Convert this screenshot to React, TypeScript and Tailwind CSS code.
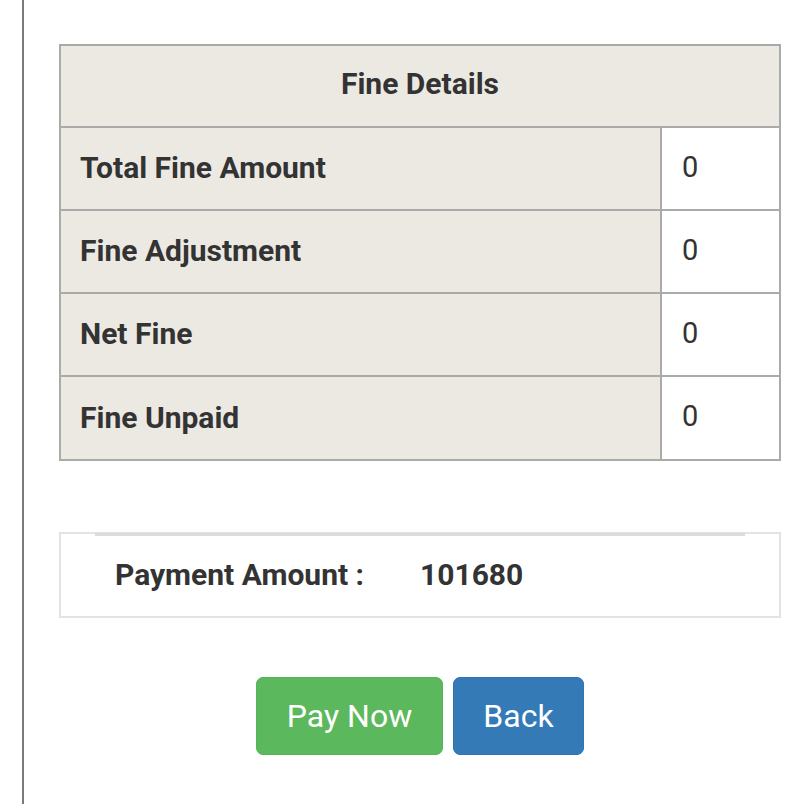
export default function App() {
  const rows = [
    ["Total Fine Amount", "0"],
    ["Fine Adjustment", "0"],
    ["Net Fine", "0"],
    ["Fine Unpaid", "0"],
  ];
  return (
    <div className="w-[800px] h-[804px] bg-white overflow-hidden flex font-['Roboto',sans-serif] text-[#333]">
      <div className="ml-[22px] h-full border-l-2 border-[#7a7a7a] pl-[35px] pt-[44px]">
        <div className="w-[722px] border-2 border-[#aaa] bg-[#ece9e3]">
          <div className="h-[82px] flex items-center justify-center border-b-2 border-[#aaa] text-[30px] font-bold pb-[5px]">
            Fine Details
          </div>
          {rows.map(([label, value], i) => (
            <div
              key={label}
              className={`flex ${i < rows.length - 1 ? "h-[83px] border-b-2 border-[#aaa]" : "h-[82px]"}`}
            >
              <div className="flex-1 flex items-center pl-[19px] text-[30px] font-bold pb-[2px]">{label}</div>
              <div className="w-[119px] border-l-2 border-[#aaa] bg-white flex items-center pl-[20px] text-[29px] pb-[2px]">
                {value}
              </div>
            </div>
          ))}
        </div>
        <div className="mt-[71px] w-[722px] h-[86px] border-2 border-[#e3e3e3] bg-white flex flex-col">
          <div className="mx-[34px] h-[3px] bg-[#dcdcdc] -mt-[1px]" />
          <div className="flex-1 flex items-center text-[30px] font-bold pb-[3px]">
            <span className="ml-[54px] w-[305px]">Payment Amount :</span>
            <span>101680</span>
          </div>
        </div>
        <div className="mt-[59px] w-[722px] flex justify-center gap-[10px]">
          <button className="w-[187px] h-[78px] rounded-[7px] bg-[#5cb85c] border border-[#55b455] text-white text-[32px]">
            Pay Now
          </button>
          <button className="w-[131px] h-[78px] rounded-[7px] bg-[#337ab7] border border-[#3074b0] text-white text-[32px]">
            Back
          </button>
        </div>
      </div>
    </div>
  );
}
